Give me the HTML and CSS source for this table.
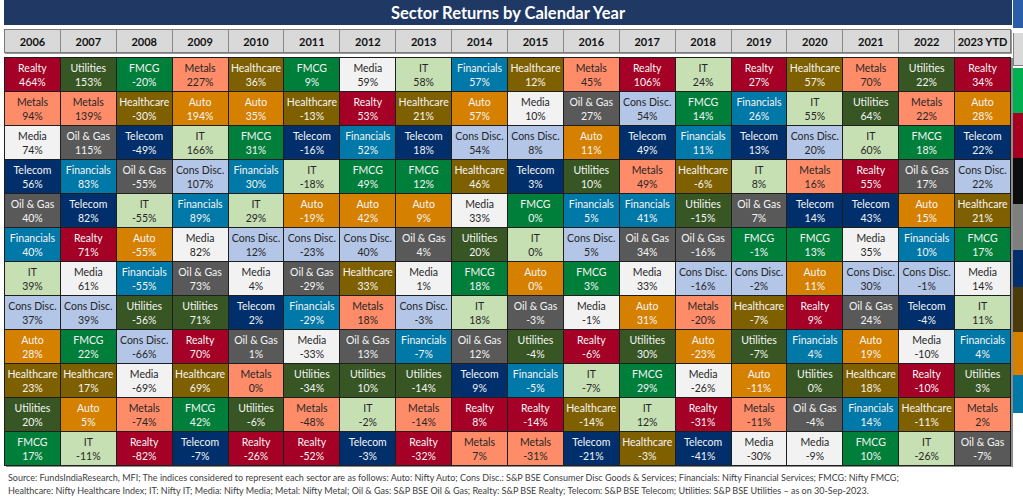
FILE: index.html
```html
<!DOCTYPE html>
<html lang="en">
<head>
<meta charset="utf-8">
<title>Sector Returns by Calendar Year</title>
<link rel="stylesheet" href="styles.css">
</head>
<body>
<div class="page">
  <div class="main">
    <div class="title">Sector Returns by Calendar Year</div>
    <div class="years">
      <div>2006</div><div>2007</div><div>2008</div><div>2009</div><div>2010</div><div>2011</div><div>2012</div><div>2013</div><div>2014</div><div>2015</div><div>2016</div><div>2017</div><div>2018</div><div>2019</div><div>2020</div><div>2021</div><div>2022</div><div>2023 YTD</div>
    </div>
    <div class="grid">
      <div class="c re"><span>Realty</span><span>464%</span></div>
      <div class="c ut"><span>Utilities</span><span>153%</span></div>
      <div class="c fm"><span>FMCG</span><span>-20%</span></div>
      <div class="c me"><span>Metals</span><span>227%</span></div>
      <div class="c hc"><span>Healthcare</span><span>36%</span></div>
      <div class="c fm"><span>FMCG</span><span>9%</span></div>
      <div class="c md"><span>Media</span><span>59%</span></div>
      <div class="c it"><span>IT</span><span>58%</span></div>
      <div class="c fi"><span>Financials</span><span>57%</span></div>
      <div class="c hc"><span>Healthcare</span><span>12%</span></div>
      <div class="c me"><span>Metals</span><span>45%</span></div>
      <div class="c re"><span>Realty</span><span>106%</span></div>
      <div class="c it"><span>IT</span><span>24%</span></div>
      <div class="c re"><span>Realty</span><span>27%</span></div>
      <div class="c hc"><span>Healthcare</span><span>57%</span></div>
      <div class="c me"><span>Metals</span><span>70%</span></div>
      <div class="c ut"><span>Utilities</span><span>22%</span></div>
      <div class="c re"><span>Realty</span><span>34%</span></div>

      <div class="c me"><span>Metals</span><span>94%</span></div>
      <div class="c me"><span>Metals</span><span>139%</span></div>
      <div class="c hc"><span>Healthcare</span><span>-30%</span></div>
      <div class="c au"><span>Auto</span><span>194%</span></div>
      <div class="c au"><span>Auto</span><span>35%</span></div>
      <div class="c hc"><span>Healthcare</span><span>-13%</span></div>
      <div class="c re"><span>Realty</span><span>53%</span></div>
      <div class="c hc"><span>Healthcare</span><span>21%</span></div>
      <div class="c au"><span>Auto</span><span>57%</span></div>
      <div class="c md"><span>Media</span><span>10%</span></div>
      <div class="c og"><span>Oil &amp; Gas</span><span>27%</span></div>
      <div class="c cd"><span>Cons Disc.</span><span>54%</span></div>
      <div class="c fm"><span>FMCG</span><span>14%</span></div>
      <div class="c fi"><span>Financials</span><span>26%</span></div>
      <div class="c it"><span>IT</span><span>55%</span></div>
      <div class="c ut"><span>Utilities</span><span>64%</span></div>
      <div class="c me"><span>Metals</span><span>22%</span></div>
      <div class="c au"><span>Auto</span><span>28%</span></div>

      <div class="c md"><span>Media</span><span>74%</span></div>
      <div class="c og"><span>Oil &amp; Gas</span><span>115%</span></div>
      <div class="c te"><span>Telecom</span><span>-49%</span></div>
      <div class="c it"><span>IT</span><span>166%</span></div>
      <div class="c fm"><span>FMCG</span><span>31%</span></div>
      <div class="c te"><span>Telecom</span><span>-16%</span></div>
      <div class="c fi"><span>Financials</span><span>52%</span></div>
      <div class="c te"><span>Telecom</span><span>18%</span></div>
      <div class="c cd"><span>Cons Disc.</span><span>54%</span></div>
      <div class="c cd"><span>Cons Disc.</span><span>8%</span></div>
      <div class="c au"><span>Auto</span><span>11%</span></div>
      <div class="c te"><span>Telecom</span><span>49%</span></div>
      <div class="c fi"><span>Financials</span><span>11%</span></div>
      <div class="c te"><span>Telecom</span><span>13%</span></div>
      <div class="c cd"><span>Cons Disc.</span><span>20%</span></div>
      <div class="c it"><span>IT</span><span>60%</span></div>
      <div class="c fm"><span>FMCG</span><span>18%</span></div>
      <div class="c te"><span>Telecom</span><span>22%</span></div>

      <div class="c te"><span>Telecom</span><span>56%</span></div>
      <div class="c fi"><span>Financials</span><span>83%</span></div>
      <div class="c og"><span>Oil &amp; Gas</span><span>-55%</span></div>
      <div class="c cd"><span>Cons Disc.</span><span>107%</span></div>
      <div class="c fi"><span>Financials</span><span>30%</span></div>
      <div class="c it"><span>IT</span><span>-18%</span></div>
      <div class="c fm"><span>FMCG</span><span>49%</span></div>
      <div class="c fm"><span>FMCG</span><span>12%</span></div>
      <div class="c hc"><span>Healthcare</span><span>46%</span></div>
      <div class="c te"><span>Telecom</span><span>3%</span></div>
      <div class="c ut"><span>Utilities</span><span>10%</span></div>
      <div class="c me"><span>Metals</span><span>49%</span></div>
      <div class="c hc"><span>Healthcare</span><span>-6%</span></div>
      <div class="c it"><span>IT</span><span>8%</span></div>
      <div class="c me"><span>Metals</span><span>16%</span></div>
      <div class="c re"><span>Realty</span><span>55%</span></div>
      <div class="c og"><span>Oil &amp; Gas</span><span>17%</span></div>
      <div class="c cd"><span>Cons Disc.</span><span>22%</span></div>

      <div class="c og"><span>Oil &amp; Gas</span><span>40%</span></div>
      <div class="c te"><span>Telecom</span><span>82%</span></div>
      <div class="c it"><span>IT</span><span>-55%</span></div>
      <div class="c fi"><span>Financials</span><span>89%</span></div>
      <div class="c it"><span>IT</span><span>29%</span></div>
      <div class="c au"><span>Auto</span><span>-19%</span></div>
      <div class="c au"><span>Auto</span><span>42%</span></div>
      <div class="c au"><span>Auto</span><span>9%</span></div>
      <div class="c md"><span>Media</span><span>33%</span></div>
      <div class="c fm"><span>FMCG</span><span>0%</span></div>
      <div class="c fi"><span>Financials</span><span>5%</span></div>
      <div class="c fi"><span>Financials</span><span>41%</span></div>
      <div class="c ut"><span>Utilities</span><span>-15%</span></div>
      <div class="c og"><span>Oil &amp; Gas</span><span>7%</span></div>
      <div class="c te"><span>Telecom</span><span>14%</span></div>
      <div class="c te"><span>Telecom</span><span>43%</span></div>
      <div class="c au"><span>Auto</span><span>15%</span></div>
      <div class="c hc"><span>Healthcare</span><span>21%</span></div>

      <div class="c fi"><span>Financials</span><span>40%</span></div>
      <div class="c re"><span>Realty</span><span>71%</span></div>
      <div class="c au"><span>Auto</span><span>-55%</span></div>
      <div class="c md"><span>Media</span><span>82%</span></div>
      <div class="c cd"><span>Cons Disc.</span><span>12%</span></div>
      <div class="c cd"><span>Cons Disc.</span><span>-23%</span></div>
      <div class="c cd"><span>Cons Disc.</span><span>40%</span></div>
      <div class="c og"><span>Oil &amp; Gas</span><span>4%</span></div>
      <div class="c ut"><span>Utilities</span><span>20%</span></div>
      <div class="c it"><span>IT</span><span>0%</span></div>
      <div class="c cd"><span>Cons Disc.</span><span>5%</span></div>
      <div class="c og"><span>Oil &amp; Gas</span><span>34%</span></div>
      <div class="c og"><span>Oil &amp; Gas</span><span>-16%</span></div>
      <div class="c fm"><span>FMCG</span><span>-1%</span></div>
      <div class="c fm"><span>FMCG</span><span>13%</span></div>
      <div class="c md"><span>Media</span><span>35%</span></div>
      <div class="c fi"><span>Financials</span><span>10%</span></div>
      <div class="c fm"><span>FMCG</span><span>17%</span></div>

      <div class="c it"><span>IT</span><span>39%</span></div>
      <div class="c md"><span>Media</span><span>61%</span></div>
      <div class="c fi"><span>Financials</span><span>-55%</span></div>
      <div class="c og"><span>Oil &amp; Gas</span><span>73%</span></div>
      <div class="c md"><span>Media</span><span>4%</span></div>
      <div class="c og"><span>Oil &amp; Gas</span><span>-29%</span></div>
      <div class="c hc"><span>Healthcare</span><span>33%</span></div>
      <div class="c md"><span>Media</span><span>1%</span></div>
      <div class="c fm"><span>FMCG</span><span>18%</span></div>
      <div class="c au"><span>Auto</span><span>0%</span></div>
      <div class="c fm"><span>FMCG</span><span>3%</span></div>
      <div class="c md"><span>Media</span><span>33%</span></div>
      <div class="c cd"><span>Cons Disc.</span><span>-16%</span></div>
      <div class="c cd"><span>Cons Disc.</span><span>-2%</span></div>
      <div class="c au"><span>Auto</span><span>11%</span></div>
      <div class="c cd"><span>Cons Disc.</span><span>30%</span></div>
      <div class="c cd"><span>Cons Disc.</span><span>-1%</span></div>
      <div class="c md"><span>Media</span><span>14%</span></div>

      <div class="c cd"><span>Cons Disc.</span><span>37%</span></div>
      <div class="c cd"><span>Cons Disc.</span><span>39%</span></div>
      <div class="c ut"><span>Utilities</span><span>-56%</span></div>
      <div class="c ut"><span>Utilities</span><span>71%</span></div>
      <div class="c te"><span>Telecom</span><span>2%</span></div>
      <div class="c fi"><span>Financials</span><span>-29%</span></div>
      <div class="c me"><span>Metals</span><span>18%</span></div>
      <div class="c cd"><span>Cons Disc.</span><span>-3%</span></div>
      <div class="c it"><span>IT</span><span>18%</span></div>
      <div class="c og"><span>Oil &amp; Gas</span><span>-3%</span></div>
      <div class="c md"><span>Media</span><span>-1%</span></div>
      <div class="c au"><span>Auto</span><span>31%</span></div>
      <div class="c me"><span>Metals</span><span>-20%</span></div>
      <div class="c hc"><span>Healthcare</span><span>-7%</span></div>
      <div class="c re"><span>Realty</span><span>9%</span></div>
      <div class="c og"><span>Oil &amp; Gas</span><span>24%</span></div>
      <div class="c te"><span>Telecom</span><span>-4%</span></div>
      <div class="c it"><span>IT</span><span>11%</span></div>

      <div class="c au"><span>Auto</span><span>28%</span></div>
      <div class="c fm"><span>FMCG</span><span>22%</span></div>
      <div class="c cd"><span>Cons Disc.</span><span>-66%</span></div>
      <div class="c re"><span>Realty</span><span>70%</span></div>
      <div class="c og"><span>Oil &amp; Gas</span><span>1%</span></div>
      <div class="c md"><span>Media</span><span>-33%</span></div>
      <div class="c og"><span>Oil &amp; Gas</span><span>13%</span></div>
      <div class="c fi"><span>Financials</span><span>-7%</span></div>
      <div class="c og"><span>Oil &amp; Gas</span><span>12%</span></div>
      <div class="c ut"><span>Utilities</span><span>-4%</span></div>
      <div class="c re"><span>Realty</span><span>-6%</span></div>
      <div class="c ut"><span>Utilities</span><span>30%</span></div>
      <div class="c au"><span>Auto</span><span>-23%</span></div>
      <div class="c ut"><span>Utilities</span><span>-7%</span></div>
      <div class="c fi"><span>Financials</span><span>4%</span></div>
      <div class="c au"><span>Auto</span><span>19%</span></div>
      <div class="c md"><span>Media</span><span>-10%</span></div>
      <div class="c fi"><span>Financials</span><span>4%</span></div>

      <div class="c hc"><span>Healthcare</span><span>23%</span></div>
      <div class="c hc"><span>Healthcare</span><span>17%</span></div>
      <div class="c md"><span>Media</span><span>-69%</span></div>
      <div class="c hc"><span>Healthcare</span><span>69%</span></div>
      <div class="c me"><span>Metals</span><span>0%</span></div>
      <div class="c ut"><span>Utilities</span><span>-34%</span></div>
      <div class="c ut"><span>Utilities</span><span>10%</span></div>
      <div class="c ut"><span>Utilities</span><span>-14%</span></div>
      <div class="c te"><span>Telecom</span><span>9%</span></div>
      <div class="c fi"><span>Financials</span><span>-5%</span></div>
      <div class="c it"><span>IT</span><span>-7%</span></div>
      <div class="c fm"><span>FMCG</span><span>29%</span></div>
      <div class="c md"><span>Media</span><span>-26%</span></div>
      <div class="c au"><span>Auto</span><span>-11%</span></div>
      <div class="c ut"><span>Utilities</span><span>0%</span></div>
      <div class="c hc"><span>Healthcare</span><span>18%</span></div>
      <div class="c re"><span>Realty</span><span>-10%</span></div>
      <div class="c ut"><span>Utilities</span><span>3%</span></div>

      <div class="c ut"><span>Utilities</span><span>20%</span></div>
      <div class="c au"><span>Auto</span><span>5%</span></div>
      <div class="c me"><span>Metals</span><span>-74%</span></div>
      <div class="c fm"><span>FMCG</span><span>42%</span></div>
      <div class="c ut"><span>Utilities</span><span>-6%</span></div>
      <div class="c me"><span>Metals</span><span>-48%</span></div>
      <div class="c it"><span>IT</span><span>-2%</span></div>
      <div class="c me"><span>Metals</span><span>-14%</span></div>
      <div class="c re"><span>Realty</span><span>8%</span></div>
      <div class="c re"><span>Realty</span><span>-14%</span></div>
      <div class="c hc"><span>Healthcare</span><span>-14%</span></div>
      <div class="c it"><span>IT</span><span>12%</span></div>
      <div class="c re"><span>Realty</span><span>-31%</span></div>
      <div class="c me"><span>Metals</span><span>-11%</span></div>
      <div class="c og"><span>Oil &amp; Gas</span><span>-4%</span></div>
      <div class="c fi"><span>Financials</span><span>14%</span></div>
      <div class="c hc"><span>Healthcare</span><span>-11%</span></div>
      <div class="c me"><span>Metals</span><span>2%</span></div>

      <div class="c fm"><span>FMCG</span><span>17%</span></div>
      <div class="c it"><span>IT</span><span>-11%</span></div>
      <div class="c re"><span>Realty</span><span>-82%</span></div>
      <div class="c te"><span>Telecom</span><span>-7%</span></div>
      <div class="c re"><span>Realty</span><span>-26%</span></div>
      <div class="c re"><span>Realty</span><span>-52%</span></div>
      <div class="c te"><span>Telecom</span><span>-3%</span></div>
      <div class="c re"><span>Realty</span><span>-32%</span></div>
      <div class="c me"><span>Metals</span><span>7%</span></div>
      <div class="c me"><span>Metals</span><span>-31%</span></div>
      <div class="c te"><span>Telecom</span><span>-21%</span></div>
      <div class="c hc"><span>Healthcare</span><span>-3%</span></div>
      <div class="c te"><span>Telecom</span><span>-41%</span></div>
      <div class="c md"><span>Media</span><span>-30%</span></div>
      <div class="c md"><span>Media</span><span>-9%</span></div>
      <div class="c fm"><span>FMCG</span><span>10%</span></div>
      <div class="c it"><span>IT</span><span>-26%</span></div>
      <div class="c og"><span>Oil &amp; Gas</span><span>-7%</span></div>
    </div>
    <div class="source">
      <p>Source: FundsIndiaResearch, MFI; The indices considered to represent each sector are as follows: Auto: Nifty Auto; Cons Disc.: S&amp;P BSE Consumer Disc Goods &amp; Services; Financials: Nifty Financial Services; FMCG: Nifty FMCG;</p>
      <p>Healthcare: Nifty Healthcare Index; IT: Nifty IT; Media: Nifty Media; Metal: Nifty Metal; Oil &amp; Gas: S&amp;P BSE Oil &amp; Gas; Realty: S&amp;P BSE Realty; Telecom: S&amp;P BSE Telecom; Utilities: S&amp;P BSE Utilities – as on 30-Sep-2023.</p>
    </div>
  </div>
  <div class="strip">
    <div class="s-blue"></div>
    <div class="s-gap"></div>
    <div class="s-head"></div>
    <div class="s-gap2"></div>
    <div class="s-green"></div>
    <div class="s-red"></div>
    <div class="s-black"></div>
    <div class="s-grey"></div>
    <div class="s-navy"></div>
    <div class="s-brown"></div>
    <div class="s-orange"></div>
    <div class="s-teal"></div>
  </div>
</div>
</body>
</html>
```

FILE: styles.css
```css
* { box-sizing: border-box; }

body {
  margin: 0;
  background: #ffffff;
  font-family: Lato, "Liberation Sans", sans-serif;
}

.page {
  display: flex;
  width: 1023px;
  height: 501px;
  overflow: hidden;
}

.main {
  width: 1013px;
  padding-left: 4px;
  display: flex;
  flex-direction: column;
  flex: none;
}

.title {
  width: 1008px;
  height: 25px;
  background: #203864;
  color: #ffffff;
  font-weight: 700;
  font-size: 16.5px;
  display: flex;
  align-items: center;
  justify-content: center;
}

.years {
  margin-top: 4px;
  width: 1007px;
  height: 24px;
  display: grid;
  grid-template-columns: repeat(18, 1fr);
  gap: 1px;
  background: #8a8a8a;
  border: 1px solid #7a7a7a;
  box-shadow: 1px 1px 0 #9a9a9a;
}

.years div {
  background: #d9d9d9;
  color: #111111;
  font-weight: 700;
  font-size: 11px;
  display: flex;
  align-items: center;
  justify-content: center;
  white-space: nowrap;
}

.grid {
  margin-top: 4px;
  width: 1007px;
  display: grid;
  grid-template-columns: repeat(18, 1fr);
  grid-auto-rows: 33px;
  gap: 1px;
  background: #1e1e1e;
  border: 1px solid #1e1e1e;
  box-shadow: 2px 1px 0 #8c8c8c;
}

.c {
  display: flex;
  flex-direction: column;
  align-items: center;
  justify-content: center;
  font-size: 10.5px;
  line-height: 14px;
  color: #f5f5f5;
  white-space: nowrap;
  overflow: hidden;
}

.re { background: #a50026; }
.ut { background: #375623; }
.fm { background: #007f3b; }
.me { background: #ff8c69; color: #262626; }
.hc { background: #7f6000; }
.md { background: #f2f2f2; color: #262626; }
.it { background: #c6e0b4; color: #262626; }
.fi { background: #0078a8; }
.au { background: #d68000; }
.og { background: #595959; }
.cd { background: #b4c6e7; color: #262626; }
.te { background: #002f6c; }

.source {
  margin-top: 6px;
  padding-left: 4px;
  color: #404040;
  font-size: 9px;
  letter-spacing: 0;
  line-height: 12.5px;
  white-space: nowrap;
}

.source p { margin: 0; }

.strip {
  flex: 1;
  display: flex;
  flex-direction: column;
}

.s-blue { height: 28px; background: #2a5ea8; }
.s-gap { height: 5px; background: #ffffff; }
.s-head { height: 33px; background: #d9d9d9; border-left: 1px solid #808080; border-bottom: 1px solid #808080; }
.s-gap2 { height: 2px; background: #ffffff; }
.s-green { height: 45px; background: #00b050; }
.s-red { height: 45px; background: #a50021; }
.s-black { height: 46px; background: #0d0d0d; }
.s-grey { height: 46px; background: #7f7f7f; }
.s-navy { height: 37px; background: #002f6c; }
.s-brown { height: 45px; background: #4a3a0c; }
.s-orange { height: 43px; background: #d68000; }
.s-teal { height: 38px; background: #0078a8; }
```
